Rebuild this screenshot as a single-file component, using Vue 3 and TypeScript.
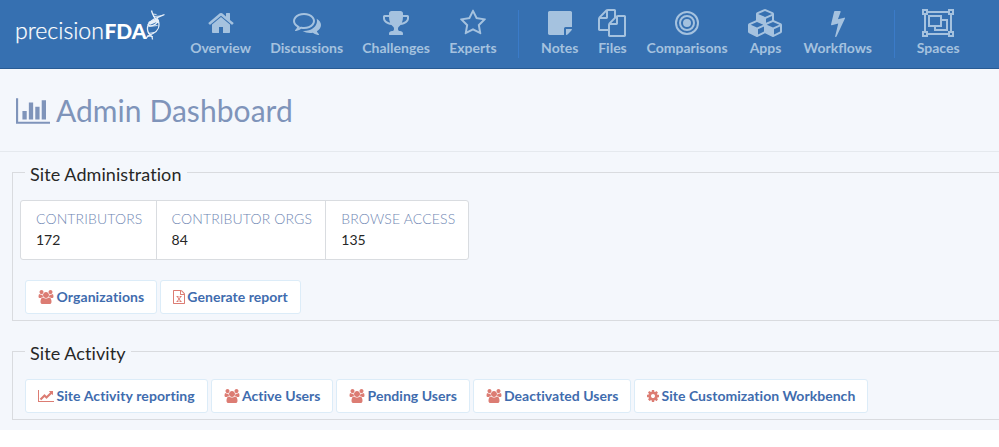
<script setup lang="ts">
interface Shape {
  box: string
  d: string
}

interface NavItem {
  label: string
  icon: string
}

interface Stat {
  label: string
  value: number
}

interface Action {
  label: string
  icon: string
}

const icons: Record<string, Shape> = {
  home: {
    box: '0 0 1792 1792',
    d: 'M1472 992v480q0 26-19 45t-45 19h-384v-384h-256v384h-384q-26 0-45-19t-19-45v-480q0-1 .5-3t.5-3l575-474 575 474q1 2 1 6zm223-69l-62 74q-8 9-21 11h-3q-13 0-21-7l-692-577-692 577q-12 8-24 7-13-2-21-11l-62-74q-8-10-7-23.5t11-21.5l719-599q32-26 76-26t76 26l244 204v-195q0-14 9-23t23-9h192q14 0 23 9t9 23v408l219 182q10 8 11 21.5t-7 23.5z',
  },
  comments: {
    box: '0 0 1792 1792',
    d: 'M704 384q-153 0-286 52t-211.5 141-78.5 191q0 82 53 158t149 132l97 56-35 84q34-20 62-39l44-31 53 10q78 14 153 14 153 0 286-52t211.5-141 78.5-191-78.5-191-211.5-141-286-52zm0-128q191 0 353.5 68.5t256.5 186.5 94 257-94 257-256.5 186.5-353.5 68.5q-86 0-176-16-124 88-278 128-36 9-86 16h-3q-11 0-20.5-8t-11.5-21q-1-3-1-6.5t.5-6.5 2-6l2.5-5 3.5-5.5 4-5 4.5-5 4-4.5q5-6 23-25t26-29.5 22.5-29 25-38.5 20.5-44q-124-72-195-177t-71-224q0-139 94-257t256.5-186.5 353.5-68.5zm822 1169q10 24 20.5 44t25 38.5 22.5 29 26 29.5 23 25q1 1 4 4.5t4.5 5 4 5 3.5 5.5l2.5 5 2 6 .5 6.5-1 6.5q-3 14-13 22t-22 7q-50-7-86-16-154-40-278-128-90 16-176 16-271 0-472-132 58 4 88 4 161 0 309-45t264-129q125-92 192-212t67-254q0-77-23-152 129 71 204 178t75 230q0 120-71 224.5t-195 176.5z',
  },
  trophy: {
    box: '0 0 1792 1792',
    d: 'M522 883q-74-162-74-371h-256v96q0 78 94.5 162t235.5 113zm1078-275v-96h-256q0 209-74 371 141-29 235.5-113t94.5-162zm128-128v128q0 71-41.5 143t-112 130-173 97.5-215.5 44.5q-42 54-95 95-38 34-52.5 72.5t-14.5 89.5q0 54 30.5 91t97.5 37q75 0 133.5 45.5t58.5 114.5v64q0 14-9 23t-23 9h-832q-14 0-23-9t-9-23v-64q0-69 58.5-114.5t133.5-45.5q67 0 97.5-37t30.5-91q0-51-14.5-89.5t-52.5-72.5q-53-41-95-95-113-5-215.5-44.5t-173-97.5-112-130-41.5-143v-128q0-40 28-68t68-28h288v-96q0-66 47-113t113-47h576q66 0 113 47t47 113v96h288q40 0 68 28t28 68z',
  },
  star: {
    box: '0 0 1792 1792',
    d: 'M1201 1004l306-297-422-62-189-382-189 382-422 62 306 297-73 421 378-199 377 199zm527-357q0 22-26 48l-363 354 86 500q1 7 1 20 0 50-41 50-19 0-40-12l-449-236-449 236q-22 12-40 12-21 0-31.5-14.5t-10.5-35.5q0-6 2-20l86-500-364-354q-25-27-25-48 0-37 56-46l502-73 225-455q19-41 49-41t49 41l225 455 502 73q56 9 56 46z',
  },
  note: {
    box: '0 0 1792 1792',
    d: 'M1248 1152q-40 0-68 28t-28 68v416h-928q-40 0-68-28t-28-68v-1344q0-40 28-68t68-28h1344q40 0 68 28t28 68v928zm32 128h381q-15 82-65 132l-184 184q-50 50-132 65z',
  },
  files: {
    box: '0 0 1792 1792',
    d: 'M1696 384q40 0 68 28t28 68v1216q0 40-28 68t-68 28h-960q-40 0-68-28t-28-68v-288h-544q-40 0-68-28t-28-68v-672q0-40 20-88t48-76l408-408q28-28 76-48t88-20h416q40 0 68 28t28 68v328q68-40 128-40h416zm-544 213l-299 299h299v-299zm-640-384l-299 299h299v-299zm196 647l316-316v-416h-384v416q0 40-28 68t-68 28h-416v640h512v-256q0-40 20-88t48-76zm956 804v-1152h-384v416q0 40-28 68t-68 28h-416v640h896z',
  },
  target: {
    box: '0 0 1792 1792',
    d: 'M896 640a256 256 0 1 1 0 512a256 256 0 1 1 0-512zM896 384a512 512 0 1 1 0 1024a512 512 0 1 1 0-1024zM896 512a384 384 0 1 0 0 768a384 384 0 1 0 0-768zM896 128a768 768 0 1 1 0 1536a768 768 0 1 1 0-1536zM896 256a640 640 0 1 0 0 1280a640 640 0 1 0 0-1280z',
  },
  cubes: {
    box: '0 0 2304 1792',
    d: 'M640 1632l384-192v-314l-384 164zm-64-454l404-173-404-173-404 173zm1088 454l384-192v-314l-384 164zm-64-454l404-173-404-173-404 173zm-448-293l384-165v-266l-384 164zm-64-379l441-189-441-189-441 189zm1088 518v416q0 36-19 67t-52 47l-448 224q-25 14-57 14t-57-14l-448-224q-4-2-7-4-2 2-7 4l-448 224q-25 14-57 14t-57-14l-448-224q-33-16-52-47t-19-67v-416q0-38 21.500-70t56.500-48l434-186v-400q0-38 21.500-70t56.500-48l448-192q23-10 50-10t50 10l448 192q35 16 56.500 48t21.500 70v400l434 186q36 16 57 48t21 70z',
  },
  bolt: {
    box: '448 0 896 1792',
    d: 'M1333 566q18 20 7 44l-540 1157q-13 25-42 25-4 0-14-2-17-5-25.500-19t-4.500-30l197-808-406 101q-4 1-12 1-18 0-31-11-18-15-13-39l201-825q4-14 16-23t28-9h328q19 0 32 12.500t13 29.500q0 8-5 18l-171 463 396-98q8-2 12-2 19 0 34 15z',
  },
  group: {
    box: '0 0 2048 1792',
    d: 'M2048 384h-128v1024h128v384h-384v-128h-1280v128h-384v-384h128v-1024h-128v-384h384v128h1280v-128h384zm-256-256v128h128v-128zm-1664 0v128h128v-128zm128 1536v-128h-128v128zm1408-128v-128h128v-1024h-128v-128h-1280v128h-128v1024h128v128zm256 128v-128h-128v128zM1280 640h384v768h-896v-256h-384v-768h896zm-768 384h640v-512h-640zm1024 256v-512h-256v384h-384v128z',
  },
  bars: {
    box: '0 0 2048 1792',
    d: 'M640 896v512h-256v-512zm384-512v1024h-256v-1024zm1024 1152v128h-2048v-1536h128v1408zm-640-896v768h-256v-768zm384-384v1152h-256v-1152z',
  },
  users: {
    box: '0 0 2048 1792',
    d: 'M657 896q-162 5-265 128h-134q-82 0-138-40.500t-56-118.500q0-353 124-353 6 0 43.500 21t97.500 42.500 119 21.500q67 0 133-23-5 37-5 66 0 139 81 256zm1071 637q0 120-73 189.500t-194 69.500h-874q-121 0-194-69.500t-73-189.500q0-53 3.500-103.500t14-109 26.500-108.500 43-97.500 62-81 85.500-53.500 111.500-20q10 0 43 21.500t73 48 107 48 135 21.500 135-21.500 107-48 73-48 43-21.500q61 0 111.500 20t85.500 53.500 62 81 43 97.500 26.500 108.500 14 109 3.500 103.500zm-1024-1277q0 106-75 181t-181 75-181-75-75-181 75-181 181-75 181 75 75 181zm704 384q0 159-112.500 271.500t-271.500 112.500-271.500-112.500-112.500-271.500 112.500-271.500 271.500-112.500 271.500 112.500 112.500 271.500zm576 225q0 78-56 118.500t-138 40.500h-134q-103-123-265-128 81-117 81-256 0-29-5-66 66 23 133 23 59 0 119-21.500t97.500-42.500 43.500-21q124 0 124 353zm-128-609q0 106-75 181t-181 75-181-75-75-181 75-181 181-75 181 75 75 181z',
  },
  excel: {
    box: '128 0 1536 1792',
    d: 'M1596 380q28 28 48 76t20 88v1152q0 40-28 68t-68 28h-1344q-40 0-68-28t-28-68v-1600q0-40 28-68t68-28h896q40 0 88 20t76 48zm-444-244v376h376q-10-29-22-41l-313-313q-12-12-41-22zm384 1528v-1024h-416q-40 0-68-28t-28-68v-416h-768v1536h1280zM557 1429v107h281v-107h-75l103-161 26-46h2l30 46 103 161h-77v107h291v-107h-68l-192-273 195-282h67v-106h-279v106h74l-103 159-26 46h-2l-30-46-103-159h77v-106h-290v106h68l189 271-194 284z',
  },
  trend: {
    box: '0 0 2048 1792',
    d: 'M2048 1536v128h-2048v-1536h128v1408zM1920 288v435q0 21-19.500 29.500t-35.500-7.500l-121-121-633 633q-10 10-23 10t-23-10l-233-233-416 416-192-192 585-585q10-10 23-10t23 10l233 233 464-464-121-121q-16-16-7.500-35.500t29.500-19.500h435q14 0 23 9t9 23z',
  },
  cog: {
    box: '128 0 1536 1792',
    d: 'M1152 896q0-106-75-181t-181-75-181 75-75 181 75 181 181 75 181-75 75-181zm512-109v222q0 12-8 23t-20 13l-185 28q-19 54-39 91 35 50 107 138 10 12 10 25t-9 23q-27 37-99 108t-94 71q-12 0-26-9l-138-108q-44 23-91 38-16 136-29 186-7 28-36 28h-222q-14 0-24.500-8.500t-11.500-21.500l-28-184q-49-16-90-37l-141 107q-10 9-25 9-14 0-25-11-126-114-165-168-7-10-7-23 0-12 8-23 15-21 51-66.500t54-70.500q-27-50-41-99l-183-27q-13-2-21-12.500t-8-23.500v-222q0-12 8-23t19-13l186-28q14-46 39-92-40-57-107-138-10-12-10-24 0-10 9-23 26-36 98.500-107.500t94.500-71.500q13 0 26 10l138 107q44-23 91-38 16-136 29-186 7-28 36-28h222q14 0 24.500 8.500t11.500 21.500l28 184q49 16 90 37l142-107q9-9 24-9 13 0 25 10 129 119 165 170 7 8 7 22 0 12-8 23-15 21-51 66.500t-54 70.500q26 50 41 98l183 28q13 2 21 12.500t8 23.500z',
  },
}

const navGroups: NavItem[][] = [
  [
    { label: 'Overview', icon: 'home' },
    { label: 'Discussions', icon: 'comments' },
    { label: 'Challenges', icon: 'trophy' },
    { label: 'Experts', icon: 'star' },
  ],
  [
    { label: 'Notes', icon: 'note' },
    { label: 'Files', icon: 'files' },
    { label: 'Comparisons', icon: 'target' },
    { label: 'Apps', icon: 'cubes' },
    { label: 'Workflows', icon: 'bolt' },
  ],
  [{ label: 'Spaces', icon: 'group' }],
]

const stats: Stat[] = [
  { label: 'Contributors', value: 172 },
  { label: 'Contributor Orgs', value: 84 },
  { label: 'Browse Access', value: 135 },
]

const adminActions: Action[] = [
  { label: 'Organizations', icon: 'users' },
  { label: 'Generate report', icon: 'excel' },
]

const activityActions: Action[] = [
  { label: 'Site Activity reporting', icon: 'trend' },
  { label: 'Active Users', icon: 'users' },
  { label: 'Pending Users', icon: 'users' },
  { label: 'Deactivated Users', icon: 'users' },
  { label: 'Site Customization Workbench', icon: 'cog' },
]
</script>

<template>
  <div class="page">
    <nav class="navbar">
      <a class="brand">
        <svg class="logo" viewBox="0 0 152 40" aria-label="precisionFDA">
          <text class="logo-light" x="-1" y="31" textLength="89" lengthAdjust="spacingAndGlyphs">precision</text>
          <text class="logo-bold" x="88.500" y="31" textLength="42" lengthAdjust="spacingAndGlyphs">FDA</text>
          <g class="helix">
            <path d="M135.500 2.500C136.500 7 138 9 141 13M148.500 6.500C141 9.500 134 12 132 17" />
            <path class="band" d="M133 15.500L142.500 11.500" />
            <path d="M132 17c3 2 9 0 10-5M142 12c2.500 6 0 11-5 13.500S131 28 130 30.500M132.500 16c-2 5-1.500 7 .5 9.500s4 3 3.500 6" />
            <path class="rungs" d="M136.500 6l4 .5M137 8.500l8-.5M132.500 18.500l9-1M132 25.500l6-1M131 28l6 .5" />
          </g>
        </svg>
      </a>
      <div v-for="(items, g) in navGroups" :key="g" class="nav-group">
        <a v-for="item in items" :key="item.label" class="nav-item">
          <svg class="nav-icon" :viewBox="icons[item.icon].box"><path :d="icons[item.icon].d" /></svg>
          <span>{{ item.label }}</span>
        </a>
      </div>
    </nav>

    <header class="title-bar">
      <h1>
        <svg class="title-icon" :viewBox="icons.bars.box"><path :d="icons.bars.d" /></svg>
        <span>Admin Dashboard</span>
      </h1>
    </header>

    <fieldset class="panel">
      <legend>Site Administration</legend>
      <div class="stats">
        <div v-for="stat in stats" :key="stat.label" class="stat">
          <div class="stat-label">{{ stat.label }}</div>
          <div class="stat-value">{{ stat.value }}</div>
        </div>
      </div>
      <div class="actions">
        <a v-for="action in adminActions" :key="action.label" class="btn">
          <svg class="btn-icon" :viewBox="icons[action.icon].box"><path :d="icons[action.icon].d" /></svg>
          <span>{{ action.label }}</span>
        </a>
      </div>
    </fieldset>

    <fieldset class="panel activity">
      <legend>Site Activity</legend>
      <div class="actions">
        <a v-for="action in activityActions" :key="action.label" class="btn">
          <svg class="btn-icon" :viewBox="icons[action.icon].box"><path :d="icons[action.icon].d" /></svg>
          <span>{{ action.label }}</span>
        </a>
      </div>
    </fieldset>
  </div>
</template>

<style>
body {
  background: #fff;
}
</style>

<style scoped>
.page {
  box-sizing: border-box;
  height: 430px;
  overflow: hidden;
  background: #f4f7fc;
  color: #272727;
  font: 14px/20px Lato, 'Open Sans', sans-serif;
}

.navbar {
  box-sizing: border-box;
  display: flex;
  height: 69px;
  background: #3670b1;
  border-bottom: 1px solid #285b94;
}

.brand {
  flex: 0 0 164.500px;
  padding: 8px 0 0 16px;
}

.logo {
  display: block;
  width: 152px;
  height: 40px;
  fill: #fff;
  overflow: visible;
}

.logo-light {
  font: 300 23.500px Lato, sans-serif;
  stroke: #fff;
  stroke-width: 0.250;
}

.logo-bold {
  font: 900 20px Lato, sans-serif;
}

.helix {
  fill: none;
  stroke: #e7eff8;
  stroke-width: 1.300;
}

.helix .band {
  stroke-width: 3.500;
}

.helix .rungs {
  stroke-width: 0.900;
}

.nav-group {
  display: flex;
  padding-top: 9px;
}

.nav-group + .nav-group::before {
  content: '';
  width: 1px;
  height: 48px;
  margin: 1px 12px 0;
  background: #3b7bc8;
}

.nav-item {
  display: flex;
  flex-direction: column;
  align-items: center;
  padding: 0 9.850px;
  color: #a5c2df;
  font-weight: 700;
  white-space: nowrap;
}

.nav-group + .nav-group .nav-item {
  padding: 0 10.100px;
}

.nav-icon {
  height: 28px;
  fill: #a5c2df;
}

.nav-item span {
  margin: 1px -0.200px 0;
}

.title-bar {
  box-sizing: border-box;
  height: 83px;
  padding: 25px 16px 0;
  border-bottom: 1px solid #e5e9ee;
}

h1 {
  display: flex;
  align-items: center;
  gap: 5.700px;
  margin: 0;
  color: #7f94ba;
  font-size: 30px;
  font-weight: 400;
  line-height: 33px;
  letter-spacing: 0.060px;
}

.title-icon {
  height: 30px;
  fill: #7f94ba;
}

.panel {
  box-sizing: border-box;
  height: 159px;
  min-width: 0;
  margin: 10px 0 0 12px;
  padding: 0 0 0 7px;
  border: 1px solid #d9dbdf;
  border-right: 0;
}

legend {
  margin-left: 5px;
  padding: 0 5px;
  height: 20px;
  font-size: 18px;
  line-height: 24px;
  letter-spacing: 0.080px;
}

.stats {
  display: flex;
  width: max-content;
  height: 60px;
  box-sizing: border-box;
  margin-top: 18px;
  background: #fff;
  border: 1px solid #d9dce0;
  border-radius: 3px;
}

.stat {
  padding: 8px 13.200px 0 15px;
}

.stat:last-child {
  padding-right: 13px;
}

.stat + .stat {
  border-left: 1px solid #d9dce0;
}

.stat-label {
  color: #7087b3;
  font-weight: 300;
  letter-spacing: 0.130px;
  text-transform: uppercase;
}

.stat-value {
  line-height: 22px;
}

.actions {
  display: flex;
  gap: 2.700px;
  padding: 20px 0 0 5px;
}

.btn {
  box-sizing: border-box;
  display: flex;
  align-items: center;
  gap: 2.400px;
  height: 34px;
  padding: 0 12px;
  background: #fff;
  border: 1px solid #dcecf8;
  border-radius: 3px;
  color: #3f6cae;
  font-weight: 700;
  letter-spacing: 0.030px;
  white-space: nowrap;
}

.btn:first-child {
  letter-spacing: 0.100px;
}

.btn-icon {
  height: 14px;
  fill: #dc7c73;
}

.activity {
  height: 79px;
  margin-top: 20px;
}

.activity .actions {
  padding-top: 18px;
}
</style>
